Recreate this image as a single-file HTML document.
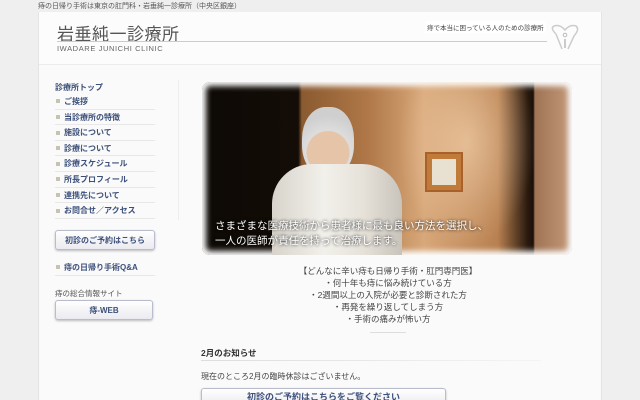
<!DOCTYPE html>
<html><head><meta charset="utf-8"><style>
*{margin:0;padding:0;box-sizing:border-box}
html,body{width:640px;height:400px;overflow:hidden}
body{background:#efefef;font-family:"Liberation Sans","Noto Sans CJK JP",sans-serif;color:#444;position:relative}
.a{position:absolute}
.top{left:38px;top:1px;font-size:7px;color:#555;white-space:nowrap}
.wrap{left:38px;top:12px;width:564px;height:388px;background:#fafafa;border-left:1px solid #e4e4e4;border-right:1px solid #e4e4e4}
.nav div{height:15.6px;border-bottom:1px solid #e8e8e8;font-size:8px;font-weight:bold;color:#3b4f7a;line-height:15px;white-space:nowrap}
.nav i{display:inline-block;width:4px;height:4px;background:#c8c2b0;margin:0 4px 1px 1px;vertical-align:middle}
.btn{background:linear-gradient(#fff,#eaeaf0);border:1px solid #b8bccc;border-radius:3px;box-shadow:0 1px 2px rgba(0,0,0,.25);font-size:8px;font-weight:bold;color:#3b4f7a;text-align:center}
.c{font-size:8.5px;color:#444;text-align:center;line-height:12px;white-space:nowrap}
</style></head><body>
<div class="a top">痔の日帰り手術は東京の肛門科・岩垂純一診療所（中央区銀座）</div>
<div class="a wrap"></div>
<div class="a" style="left:39px;top:12px;width:562px;height:53px;background:#fcfcfc;border-bottom:1px solid #ececec"></div>
<div class="a" style="left:57px;top:20px;font-size:17px;color:#555;letter-spacing:.5px;white-space:nowrap">岩垂純一診療所</div>
<div class="a" style="left:57px;top:41px;width:490px;height:1px;background:#ccc"></div>
<div class="a" style="left:57px;top:44px;font-size:7.5px;color:#666;letter-spacing:.6px">IWADARE JUNICHI CLINIC</div>
<div class="a" style="left:425px;top:21px;font-size:6.5px;color:#444;background:#fff;padding:1px 2px;white-space:nowrap">痔で本当に困っている人のための診療所</div>
<svg class="a" style="left:548px;top:24px" width="36" height="30" viewBox="0 0 36 30"><path d="M8 10 Q2 4 6 2 Q12 0 17 6 Q22 0 28 2 Q32 5 26 12 L20 25 M8 10 L14 25" fill="none" stroke="#ccc" stroke-width="1.5"/><circle cx="17" cy="11" r="1.8" fill="none" stroke="#bbb"/><path d="M17 15 V24" stroke="#bbb" stroke-width="1.5"/></svg>
<div class="a" style="left:178px;top:80px;width:1px;height:140px;background:#eee"></div>
<div class="a" style="left:55px;top:82px;font-size:8px;font-weight:bold;color:#3b4f7a">診療所トップ</div>
<div class="a nav" style="left:55px;top:94px;width:100px">
<div><i></i>ご挨拶</div><div><i></i>当診療所の特徴</div><div><i></i>施設について</div><div><i></i>診療について</div><div><i></i>診療スケジュール</div><div><i></i>所長プロフィール</div><div><i></i>連携先について</div><div><i></i>お問合せ／アクセス</div>
</div>
<div class="a btn" style="left:55px;top:230px;width:100px;height:20px;line-height:19px">初診のご予約はこちら</div>
<div class="a nav" style="left:55px;top:260px;width:100px"><div><i></i>痔の日帰り手術Q&amp;A</div></div>
<div class="a" style="left:55px;top:288px;font-size:7.5px;color:#555">痔の総合情報サイト</div>
<div class="a btn" style="left:55px;top:300px;width:98px;height:20px;line-height:19px">痔-WEB</div>
<div class="a" style="left:202px;top:82px;width:370px;height:173px;border-radius:8px;overflow:hidden;background:linear-gradient(90deg,#0d0905 0,#140d07 26%,#8a5a30 27%,#b07848 45%,#d8a87a 60%,#b88050 80%,#2a1a0e 88%,#1a1008 89.5%,#a07455 90%,#c49a7a 100%);box-shadow:0 0 6px 4px #fafafa inset">
<div class="a" style="left:190px;top:0;width:150px;height:173px;background:radial-gradient(ellipse at 50% 35%,rgba(255,225,190,.55),rgba(255,220,180,0) 65%)"></div>
<div class="a" style="left:223px;top:70px;width:38px;height:40px;background:#c07a3a;border:2px solid #a8612a"><div style="margin:5px;height:26px;background:#e8e0d0"></div></div>
<div class="a" style="left:100px;top:25px;width:52px;height:70px;border-radius:45%;background:radial-gradient(circle at 50% 65%,#e6c4a8 0 40%,#ddd 42%,#cfcfcf 70%)"></div>
<div class="a" style="left:70px;top:82px;width:130px;height:100px;border-radius:40px 40px 0 0;background:linear-gradient(90deg,#d8d4cc,#f2f0ea 40%,#e6e2da 70%,#c8c4bc)"></div>
</div>
<div class="a" style="left:215px;top:219px;font-size:10.5px;color:#fff;line-height:15px;text-shadow:0 0 3px #000;white-space:nowrap">さまざまな医療技術から患者様に最も良い方法を選択し、<br>一人の医師が責任を持って治療します。</div>
<div class="a c" style="left:200px;width:376px;top:265px">【どんなに辛い痔も日帰り手術・肛門専門医】<br>・何十年も痔に悩み続けている方<br>・2週間以上の入院が必要と診断された方<br>・再発を繰り返してしまう方<br>・手術の痛みが怖い方</div>
<div class="a" style="left:370px;top:332px;width:36px;height:1px;background:#ddd"></div>
<div class="a" style="left:201px;top:347px;font-size:8.5px;font-weight:bold;color:#333">2月のお知らせ</div>
<div class="a" style="left:201px;top:360px;width:340px;height:1px;background:linear-gradient(90deg,#ddd,#f4f4f4)"></div>
<div class="a" style="left:201px;top:371px;font-size:8px;color:#444">現在のところ2月の臨時休診はございません。</div>
<div class="a btn" style="left:201px;top:388px;width:245px;height:20px;line-height:16px;font-size:9px">初診のご予約はこちらをご覧ください</div>
</body></html>
